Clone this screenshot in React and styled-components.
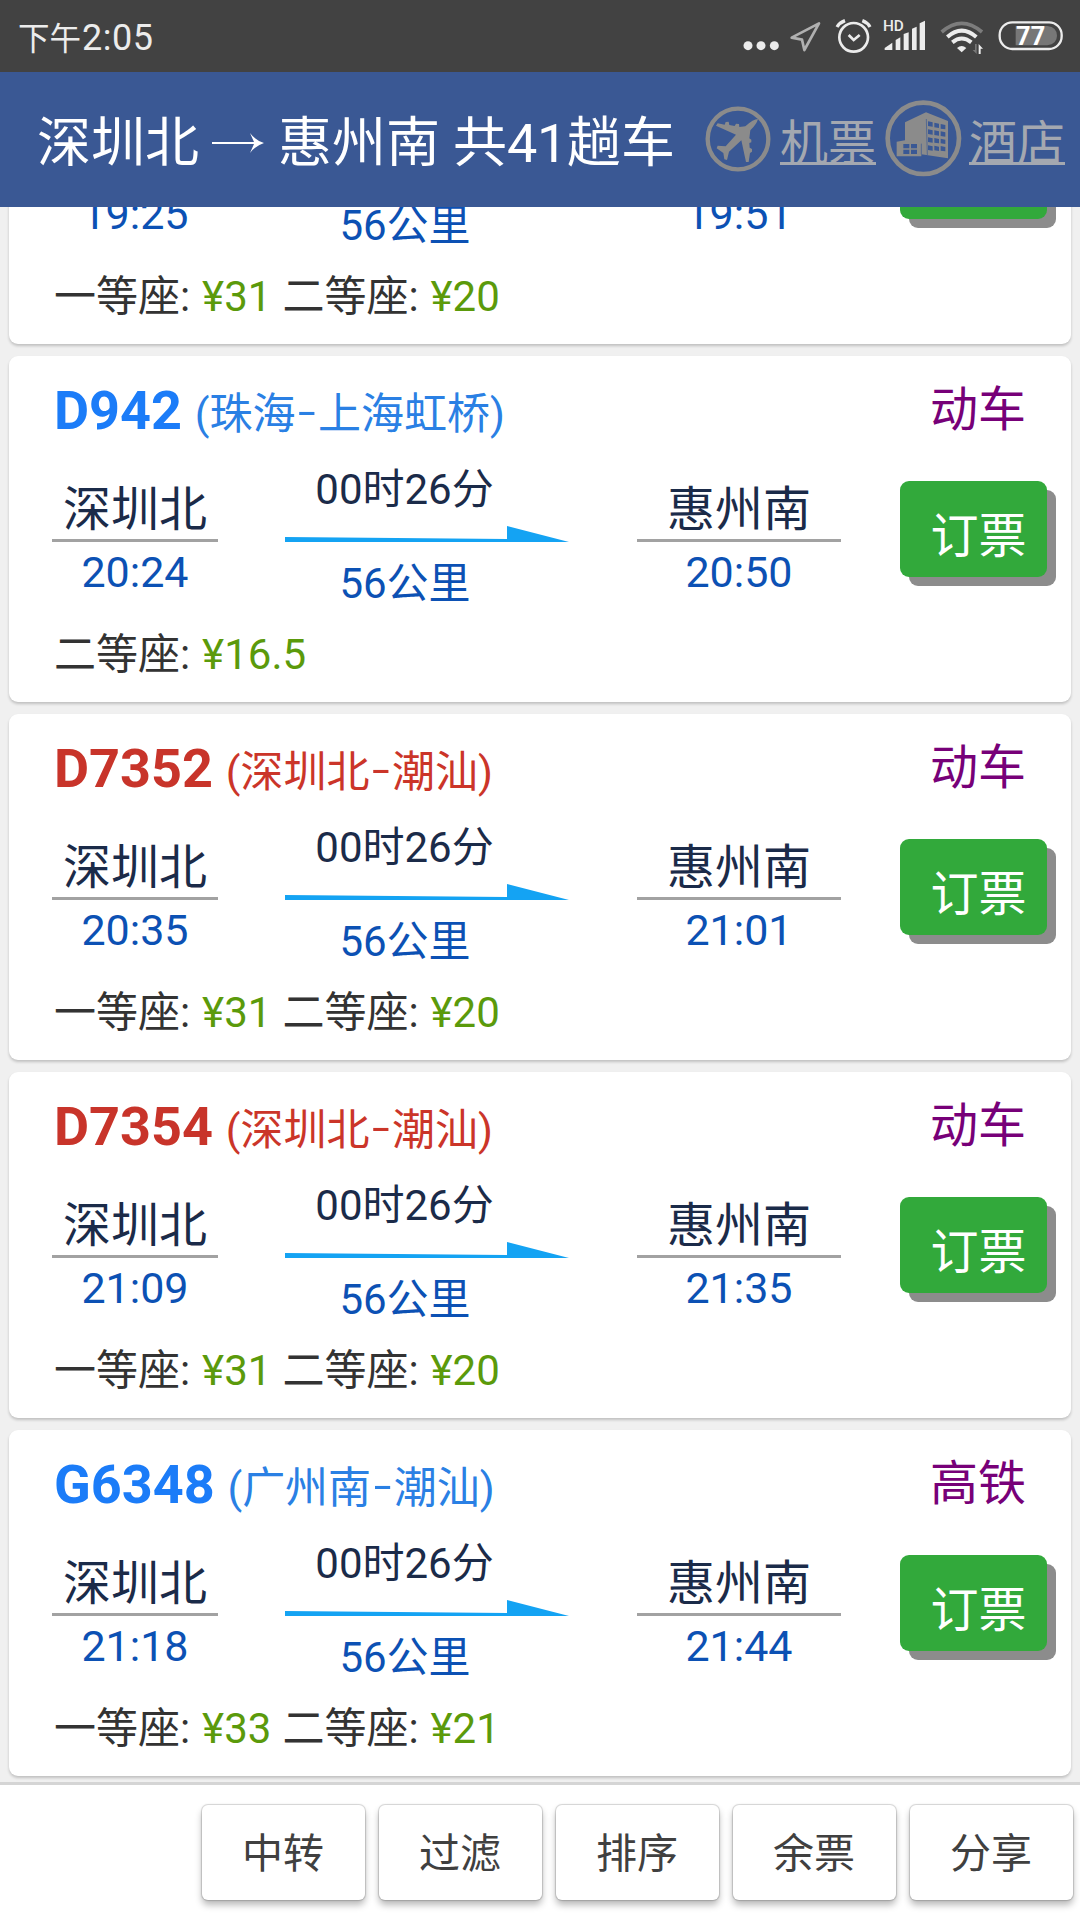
import React from "react";
import styled, { createGlobalStyle } from "styled-components";

const GlobalStyle = createGlobalStyle`
  * { box-sizing: border-box; }
  body {
    margin: 0;
    background-color: #f0f0f0;
    font-family: Roboto, "Noto Sans CJK SC", sans-serif;
    font-weight: 400;
  }
`
const Page = styled.div`
  width: 1080px;
  height: 1920px;
  display: flex;
  flex-direction: column;
  overflow: hidden;
`

const StatusBar = styled.div`
  flex: none;
  height: 72px;
  padding: 0 15px 0 18px;
  display: flex;
  justify-content: space-between;
  background-color: #424242;
  color: #ececec;
`
const Clock = styled.div`
  font-size: 31.5px;
  line-height: 76px;
  span {
    margin-left: 1px;
    font-size: 36px;
    letter-spacing: 0.5px;
  }
`

const Header = styled.header`
  flex: none;
  height: 135px;
  padding: 0 15px 0 37px;
  display: flex;
  align-items: center;
  background-color: #3a5894;
`
const Title = styled.h1`
  margin: 0;
  flex: 1;
  display: flex;
  align-items: center;
  font-size: 54px;
  font-weight: 400;
  line-height: 56px;
  padding-top: 9px;
  color: #ffffff;
  white-space: nowrap;
  svg { margin: 0 14px 3px 13px; }
`
const TrainCount = styled.span`
  margin-left: 13px;
  b {
    font-weight: 400;
    letter-spacing: -0.4px;
  }
`
const Shortcut = styled.a`
  margin-left: ${(props) => props.$gap}px;
  display: flex;
  align-items: center;
  gap: ${(props) => props.$inner}px;
  color: #a4a8b0;
  svg {
    margin-bottom: 2px;
    color: #8b8b8b;
  }
  span {
    height: 51px;
    border-bottom: 3px solid #a4a8b0;
    font-size: 48px;
    line-height: 60px;
  }
`

const TrainList = styled.main`
  flex: 1;
  min-height: 0;
  overflow: hidden;
  display: flex;
  flex-direction: column;
  justify-content: flex-end;
  gap: 12px;
  padding: 0 9px 6px;
`
const Card = styled.section`
  flex: none;
  height: 346px;
  border-radius: 9px;
  background-color: #ffffff;
  box-shadow: 0 2px 3px rgba(0, 0, 0, 0.2);
`
const CardHead = styled.div`
  height: 112px;
  padding: 0 45px;
  display: flex;
  justify-content: space-between;
  line-height: 109px;
`
const TrainNo = styled.div`
  font-size: 43px;
  color: ${(props) => (props.$local ? "#cb3529" : "#2a80e4")};
  b {
    margin-right: 2px;
    font-size: 54px;
    font-weight: 700;
    color: ${(props) => (props.$local ? "#c8342a" : "#1b7cf8")};
  }
`
const Dash = styled.span`
  font-family: Inter, sans-serif;
  font-size: 50px;
  font-weight: 300;
`
const TrainType = styled.div`
  font-size: 48px;
  line-height: 107px;
  color: #770078;
`
const CardBody = styled.div`
  height: 144px;
  padding: 0 24px 0 43px;
  display: flex;
`
const Station = styled.div`
  width: ${(props) => props.$width}px;
  text-align: center;
`
const StationName = styled.div`
  height: 74px;
  border-bottom: 3px solid #a2a2a2;
  font-size: 48px;
  line-height: 83px;
  color: #1b2b49;
`
const StationTime = styled.div`
  font-size: 43px;
  line-height: 60px;
  color: #0c51b4;
`
const Trip = styled.div`
  width: 284px;
  margin: 0 68px 0 67px;
  display: flex;
  flex-direction: column;
  font-size: 42px;
  color: #0c51b4;
  svg { flex: none; }
`
const Duration = styled.div`
  flex: none;
  width: 239px;
  height: 57px;
  text-align: center;
  line-height: 44px;
  color: #1b2b49;
`
const Distance = styled.div`
  width: 240px;
  text-align: center;
  line-height: 83px;
`
const BookButton = styled.button`
  width: 147px;
  height: 96px;
  margin: 13px 0 0 59px;
  padding: 12px 0 0 10px;
  border: none;
  border-radius: 9px;
  background-color: #32a93b;
  box-shadow: 9px 9px 0 #8c8c8c;
  font-family: inherit;
  font-size: 48px;
  line-height: 88px;
  color: #ffffff;
`
const Seats = styled.div`
  padding-left: 45px;
  display: flex;
  gap: 11px;
  font-size: 42px;
  line-height: 86px;
  color: #333333;
`
const Price = styled.span`
  margin-left: 1.5px;
  color: #5b9a0b;
`

const Toolbar = styled.footer`
  flex: none;
  height: 138px;
  padding: 20px 7px 0 0;
  border-top: 3px solid #d5d5d5;
  display: flex;
  justify-content: flex-end;
  gap: 14px;
  background-color: #ffffff;
`
const ToolButton = styled.button`
  width: 163px;
  height: 95px;
  padding: 0 1px 5px 0;
  border: none;
  border-radius: 6px;
  background-color: #ffffff;
  box-shadow: 0 0 1px 1px rgba(0, 0, 0, 0.16), 0 5px 7px rgba(0, 0, 0, 0.28);
  font-family: inherit;
  font-size: 41px;
  color: #404040;
`

function StatusIcons() {
  return (
    <svg width="322" height="72" viewBox="190 0 966 216" fill="none" stroke="#ececec">
      <g fill="#ececec" stroke="none">
        <circle cx="205" cy="137" r="13.5" />
        <circle cx="244" cy="137" r="13.5" />
        <circle cx="284" cy="137" r="13.5" />
      </g>
      <path d="M336 113 L418 70 L374 150 L367 119 Z" stroke="#b0b0b0" strokeWidth="8" strokeLinejoin="round" />
      <circle cx="522" cy="112" r="43" strokeWidth="8" />
      <path d="M507 105 L522 120 L540 105" strokeWidth="8" />
      <path d="M472 81 Q480 68 496 62 M548 62 Q564 68 571 81" strokeWidth="10" />
      <text x="610" y="93" fontSize="46" fontWeight="500" fill="#ececec" stroke="none">HD</text>
      <g fill="#ececec" stroke="none">
        <path d="M615 150 V144 L638 128 V150 Z" />
        <path d="M648 150 V120 L662 112 V150 Z" />
        <path d="M672 150 V102 L687 97 V150 Z" />
        <path d="M697 150 V86 L711 80 V150 Z" />
        <path d="M720 150 V70 L736 62 V150 Z" />
      </g>
      <path d="M786 96 Q846 44 907 96" stroke="#7c7c7c" strokeWidth="11" />
      <path d="M803 111 Q846 73 890 111" strokeWidth="12" />
      <path d="M818 127 Q846 104 875 127" strokeWidth="12" />
      <path d="M832 144 Q846 132 860 144 L846 157 Z" fill="#ececec" stroke="none" />
      <path d="M891 132 V162 L879 150 H886 V132 Z" fill="#777777" stroke="none" />
      <path d="M897 162 V132 L910 146 H903 V162 Z" fill="#ececec" stroke="none" />
      <rect x="960" y="67" width="186" height="80" rx="38" strokeWidth="7" />
      <path d="M1008 78 H1103 Q1132 82 1132 107 Q1132 132 1103 136 H1008 Z" fill="#777777" stroke="none" />
      <text x="1053" y="134" textAnchor="middle" fontSize="76" fontWeight="700" fill="#ffffff" stroke="none">77</text>
    </svg>
  )
}

function RouteArrow() {
  return (
    <svg width="52" height="20" viewBox="0 0 52 20" fill="#ffffff">
      <path d="M0 9 H42 L38 0 Q43 7 52 10 Q43 13 38 20 L42 11 H0 Z" />
    </svg>
  )
}

function PlaneIcon() {
  return (
    <svg width="66" height="68" viewBox="75 316 198 204" fill="currentColor">
      <circle cx="174" cy="418" r="91" fill="none" stroke="currentColor" strokeWidth="13" />
      <path d="M234 358 Q230 374 211 392 L208 416 L214 420 V428 L208 430 L209 444 L216 448 V456 L210 460 L206 487 L198 487 L184 422 L147 456 L141 481 L133 479 L130 460 L110 446 L113 438 L137 440 L168 405 L108 378 L113 371 L134 375 L137 367 L146 366 L148 376 L164 379 L168 372 L177 373 L178 382 L196 380 Q220 358 234 358 Z" />
    </svg>
  )
}

function HotelIcon() {
  const windows = [0, 1, 2, 3]
  return (
    <svg width="77" height="79" viewBox="615 296 231 237" fill="currentColor">
      <circle cx="730" cy="414" r="107" fill="none" stroke="currentColor" strokeWidth="14" />
      <path d="M675 366 L738 336 L804 362 V474 L724 462 V468 H650 V424 L675 420 Z" />
      <path d="M739 356 L742 464 M724 430 V462" fill="none" stroke="#3a5894" strokeWidth="2" />
      {windows.map((row) => (
        <g key={row} fill="#3a5894">
          <path d={`M744 ${363 + row * 24} l14 3 v13 l-14 -2 Z`} />
          <path d={`M763 ${367 + row * 23} l14 3 v13 l-14 -2 Z`} />
          <path d={`M782 ${371 + row * 22} l14 3 v13 l-14 -2 Z`} />
        </g>
      ))}
      <path d="M670 431 h18 v13 h-18 Z M693 431 h18 v13 h-18 Z M670 448 h18 v13 h-18 Z M693 448 h18 v13 h-18 Z" fill="#3a5894" />
    </svg>
  )
}

const trip = { from: "深圳北", to: "惠州南", duration: "00时26分" }

// the first train is scrolled under the header, only its lower half shows
const trains = [
  { id: 1, depart: "19:25", arrive: "19:51", seats: [["一等座", "¥31"], ["二等座", "¥20"]] },
  { id: 2, ...trip, no: "D942", start: "珠海", end: "上海虹桥", type: "动车", local: false, depart: "20:24", arrive: "20:50", seats: [["二等座", "¥16.5"]] },
  { id: 3, ...trip, no: "D7352", start: "深圳北", end: "潮汕", type: "动车", local: true, depart: "20:35", arrive: "21:01", seats: [["一等座", "¥31"], ["二等座", "¥20"]] },
  { id: 4, ...trip, no: "D7354", start: "深圳北", end: "潮汕", type: "动车", local: true, depart: "21:09", arrive: "21:35", seats: [["一等座", "¥31"], ["二等座", "¥20"]] },
  { id: 5, ...trip, no: "G6348", start: "广州南", end: "潮汕", type: "高铁", local: false, depart: "21:18", arrive: "21:44", seats: [["一等座", "¥33"], ["二等座", "¥21"]] },
]

const tools = ["中转", "过滤", "排序", "余票", "分享"]

function TrainCard({ train }) {
  return (
    <Card>
      <CardHead>
        {train.no && (
          <>
            <TrainNo $local={train.local}>
              <b>{train.no}</b> ({train.start}<Dash>-</Dash>{train.end})
            </TrainNo>
            <TrainType>{train.type}</TrainType>
          </>
        )}
      </CardHead>
      <CardBody>
        <Station $width={166}>
          <StationName>{train.from}</StationName>
          <StationTime>{train.depart}</StationTime>
        </Station>
        <Trip>
          <Duration>{train.duration}</Duration>
          <svg width="284" height="17" viewBox="0 0 284 17">
            <path d="M0 12 L222 14 V1 L284 17 H0 Z" fill="#14a3f3" />
          </svg>
          <Distance>56公里</Distance>
        </Trip>
        <Station $width={204}>
          <StationName>{train.to}</StationName>
          <StationTime>{train.arrive}</StationTime>
        </Station>
        <BookButton>{train.no && "订票"}</BookButton>
      </CardBody>
      <Seats>
        {train.seats.map(([name, price]) => (
          <div key={name}>{name}: <Price>{price}</Price></div>
        ))}
      </Seats>
    </Card>
  )
}

function App() {
  return (
    <Page>
      <GlobalStyle />
      <StatusBar>
        <Clock>下午<span>2:05</span></Clock>
        <StatusIcons />
      </StatusBar>
      <Header>
        <Title>
          深圳北<RouteArrow />惠州南
          <TrainCount>共<b>41</b>趟车</TrainCount>
        </Title>
        <Shortcut $gap={0} $inner={9}>
          <PlaneIcon />
          <span>机票</span>
        </Shortcut>
        <Shortcut $gap={9} $inner={7}>
          <HotelIcon />
          <span>酒店</span>
        </Shortcut>
      </Header>
      <TrainList>
        {trains.map((train) => (
          <TrainCard key={train.id} train={train} />
        ))}
      </TrainList>
      <Toolbar>
        {tools.map((tool) => (
          <ToolButton key={tool}>{tool}</ToolButton>
        ))}
      </Toolbar>
    </Page>
  )
}

export default App;
